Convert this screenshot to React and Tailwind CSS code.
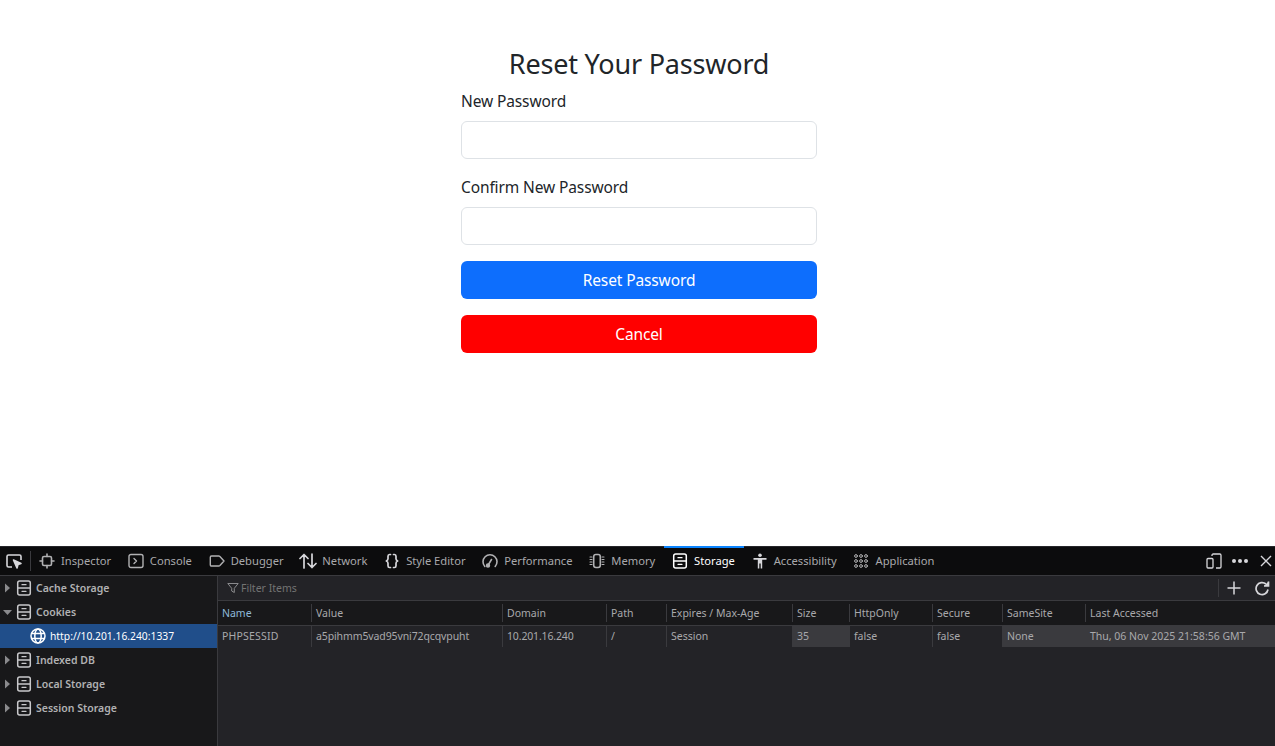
const I = ({ children, c = "#b1b1b3", w = 16 }) => (
  <svg width={w} height="16" viewBox="0 0 16 16" fill="none" stroke={c} strokeWidth="1.4" strokeLinecap="round" strokeLinejoin="round" className="shrink-0">{children}</svg>
);
const Cabinet = ({ c = "#d7d7db" }) => (
  <I c={c}><rect x="1.7" y="1" width="12.600" height="14" rx="2" strokeWidth="1.500" /><path d="M2 8h12M6 4.700h4M6 11.300h4" strokeWidth="1.300" /></I>
);
const tabs = [
  ["Inspector", <I><rect x="3.500" y="3.500" width="9" height="9" rx="1.500" strokeWidth="1.600" /><path d="M8 1v2.500M8 12.500V15M1 8h2.500M12.500 8H15" strokeWidth="1.600" /></I>],
  ["Console", <I><rect x="1" y="1.500" width="14" height="13" rx="2" /><path d="M6 5.500 8.500 8 6 10.500" /></I>],
  ["Debugger", <I><path d="M2.500 3h7.200c.5 0 .9.200 1.200.5L15 8l-4.100 4.500c-.3.3-.7.500-1.200.500H2.500c-.7 0-1.200-.5-1.200-1.200V4.200C1.300 3.500 1.800 3 2.500 3Z" /></I>],
  ["Network", <svg width="18" height="16" viewBox="0 0 18 16" fill="none" stroke="#d7d7db" strokeWidth="1.700" strokeLinecap="round" strokeLinejoin="round" className="shrink-0 -ml-[1px] -mr-[1px]"><path d="M5 15V1.500M1 5.500l4-4 4 4M13 1v13.500M9 10.500l4 4 4-4" /></svg>],
  ["Style Editor", <I c="#d7d7db"><path d="M6.500 1.500H5.500C4.300 1.500 4 2.200 4 3.200v2.600c0 1-.4 1.700-1.700 2.200C3.600 8.500 4 9.200 4 10.200v2.600c0 1 .3 1.700 1.500 1.700h1M9.500 1.500h1c1.200 0 1.500.7 1.500 1.700v2.600c0 1 .4 1.700 1.700 2.200-1.300.5-1.700 1.200-1.700 2.200v2.600c0 1-.3 1.700-1.500 1.700h-1" strokeWidth="1.700" /></I>],
  ["Performance", <I><path d="M2.800 13.500A7 7 0 1 1 13.200 13.500" strokeWidth="1.600" /><path d="M6.500 11.500 9.500 6.500" strokeWidth="1.600" /><circle cx="6" cy="12.500" r="1.500" fill="#b1b1b3" /></I>],
  ["Memory", <I><rect x="4.700" y="1.500" width="6.600" height="13" rx="2.200" strokeWidth="1.600" /><path d="M1 4h2M1 6.500h2M1 9h2M1 11.500h2M13 4h2M13 6.500h2M13 9h2M13 11.500h2" strokeWidth="1.100" /></I>],
  ["Storage", <Cabinet c="#ffffff" />, true],
  ["Accessibility", <svg width="16" height="16" viewBox="0 0 16 16" fill="#d7d7db" className="shrink-0"><circle cx="8" cy="2.200" r="1.800" /><path d="M1.500 5h13v1.700H10.200V15.500H8.700v-5H7.300v5H5.800V6.700H1.500Z" /></svg>],
  ["Application", <I><g strokeWidth="1"><circle cx="3" cy="3" r="1.400" /><circle cx="8" cy="3" r="1.400" /><circle cx="13" cy="3" r="1.400" /><circle cx="3" cy="8" r="1.400" /><circle cx="8" cy="8" r="1.400" /><circle cx="13" cy="8" r="1.400" /><circle cx="3" cy="13" r="1.400" /><circle cx="8" cy="13" r="1.400" /><circle cx="13" cy="13" r="1.400" /></g></I>],
];
const tree = [
  ["Cache Storage", "closed"],
  ["Cookies", "open"],
  ["http://10.201.16.240:1337", "child"],
  ["Indexed DB", "closed"],
  ["Local Storage", "closed"],
  ["Session Storage", "closed"],
];
const cols = [
  ["Name", "PHPSESSID", "w-[93px]", false, "tracking-[0.2px]"],
  ["Value", "a5pihmm5vad95vni72qcqvpuht", "w-[191px]", false, "tracking-[-0.11px]"],
  ["Domain", "10.201.16.240", "w-[104px]", false, "tracking-[-0.15px]"],
  ["Path", "/", "w-[60px]"],
  ["Expires / Max-Age", "Session", "w-[126px]"],
  ["Size", "35", "w-[57px]", true],
  ["HttpOnly", "false", "w-[83px]"],
  ["Secure", "false", "w-[70px]"],
  ["SameSite", "None", "w-[83px]", true],
  ["Last Accessed", "Thu, 06 Nov 2025 21:58:56 GMT", "flex-1", true],
];
const Field = ({ label }) => (
  <div className="mb-[16px]">
    <label className="block h-[32px] text-[15.500px] leading-[24px] tracking-[-0.12px] text-[#212529]">{label}</label>
    <input type="password" className="block w-full h-[38px] bg-white border border-[#dee2e6] rounded-[6px]" />
  </div>
);
export default function App() {
  return (
    <div className="w-[1275px] h-[746px] flex flex-col overflow-hidden bg-white font-['Noto_Sans',sans-serif]">
      <main className="h-[546px] shrink-0 pt-[44px] pl-[3px] flex justify-center">
        <div className="w-[356px]">
          <h1 className="h-[45px] text-[27px] leading-[40px] tracking-[-0.2px] text-center text-[#212529]">Reset Your Password</h1>
          <Field label="New Password" />
          <Field label="Confirm New Password" />
          <button className="block w-full h-[38px] pt-[2px] mb-[16px] rounded-[6px] bg-[#0d6efd] text-white text-[15.500px] tracking-[-0.12px]">Reset Password</button>
          <button className="block w-full h-[38px] pt-[2px] rounded-[6px] bg-[#ff0000] text-white text-[15.500px] tracking-[-0.12px]">Cancel</button>
        </div>
      </main>
      <section className="flex-1 flex flex-col bg-[#232327] text-[10.500px] text-[#a9a9ac]">
        <div className="h-[30px] shrink-0 flex items-stretch bg-[#0c0c0d] border-b border-[#3a3a3e] border-t border-t-[#26262a] text-[11.200px]">
          <div className="w-[30px] flex items-center justify-center pr-[2px]">
            <svg width="18" height="18" viewBox="0 0 18 18" fill="none" stroke="#d7d7db" strokeWidth="1.600" strokeLinejoin="round"><path d="M7 15H3.500C2.500 15 2 14.500 2 13.500v-9C2 3.500 2.500 3 3.500 3h11c1 0 1.500.5 1.500 1.500V8" /><path d="M8.500 8 16 11.500l-3 1-1 3.500Z" fill="#d7d7db" /></svg>
          </div>
          <div className="w-px my-[4px] bg-[#3a3a3e]" />
          {tabs.map(([name, icon, active]) => (
            <div key={name} className={`relative flex items-center gap-[6px] pl-[8px] pr-[8.750px] ${active ? "text-white" : ""}`}>
              {active && <span className="absolute left-0 right-0 -top-px h-[2px] bg-[#0a84ff]" />}
              {icon}
              <span>{name}</span>
            </div>
          ))}
          <div className="ml-auto flex items-center gap-[8px]">
            <div className="w-[18px] flex justify-center">
              <svg width="16" height="16" viewBox="0 0 16 16" fill="none" stroke="#d7d7db" strokeWidth="1.300"><path d="M6 3V2.200C6 1.500 6.500 1 7.200 1h6.600c.7 0 1.200.5 1.200 1.200v11.600c0 .7-.5 1.200-1.200 1.200H10" /><rect x="1" y="5.500" width="6" height="9.500" rx="1" /></svg>
            </div>
            <div className="w-[18px] flex justify-center gap-[2px]">
              <span className="w-[4px] h-[4px] rounded-full bg-[#d7d7db]" /><span className="w-[4px] h-[4px] rounded-full bg-[#d7d7db]" /><span className="w-[4px] h-[4px] rounded-full bg-[#d7d7db]" />
            </div>
            <div className="w-[18px] flex justify-center">
              <svg width="12" height="12" viewBox="0 0 12 12" fill="none" stroke="#d7d7db" strokeWidth="1.400"><path d="M1 1l10 10M11 1 1 11" /></svg>
            </div>
          </div>
        </div>
        <div className="flex-1 flex min-h-0">
          <aside className="w-[218px] shrink-0 bg-[#18181a] border-r border-[#3a3a3e]">
            {tree.map(([label, kind]) => (
              kind === "child" ? (
                <div key={label} className="h-[24px] flex items-center bg-[#204e8a] text-white text-[10.300px] pl-[30px] gap-[4px]">
                  <svg width="16" height="16" viewBox="0 0 16 16" fill="none" stroke="#ffffff" strokeWidth="1.500"><circle cx="8" cy="8" r="7" /><ellipse cx="8" cy="8" rx="3.200" ry="7" /><path d="M1.500 5.500h13M1.500 10.500h13" /></svg>
                  <span className="pt-[1px]">{label}</span>
                </div>
              ) : (
                <div key={label} className="h-[24px] flex items-center pl-[3px] font-semibold text-[#b1b1b3]">
                  {kind === "open" ? (
                    <svg width="10" height="10" viewBox="0 0 10 10" fill="#8a8a8d" className="shrink-0"><path d="M0 3h9L4.500 8Z" /></svg>
                  ) : (
                    <svg width="10" height="10" viewBox="0 0 10 10" fill="#8a8a8d" className="shrink-0"><path d="M2 .5 7 5 2 9.500Z" /></svg>
                  )}
                  <span className="ml-[3px] mr-[4px]"><Cabinet c="#c8c8cb" /></span>
                  <span className="pt-[1px]">{label}</span>
                </div>
              )
            ))}
          </aside>
          <div className="flex-1 min-w-0 flex flex-col">
            <div className="h-[25px] shrink-0 flex items-center border-b border-[#3a3a3e] pl-[9px]">
              <svg width="12" height="12" viewBox="0 0 12 12" fill="none" stroke="#8a8a8d" strokeWidth="1"><path d="M.8 1.500h10.400L7.300 6.300v4.200L4.700 9V6.300Z" strokeLinejoin="round" /></svg>
              <span className="ml-[2px] pt-[1px] text-[#737373]">Filter Items</span>
              <div className="ml-auto flex items-center">
                <div className="w-px h-[18px] bg-[#3a3a3e]" />
                <svg className="ml-[8px]" width="14" height="14" viewBox="0 0 14 14" stroke="#d7d7db" strokeWidth="1.500"><path d="M7 .5v13M.5 7h13" /></svg>
                <svg className="ml-[13px] mr-[5px]" width="16" height="16" viewBox="0 0 16 16" fill="none" stroke="#d7d7db" strokeWidth="1.700"><path d="M14 9.500A6 6 0 1 1 12 4" /><path d="M14.500 1.500V6H10" fill="#d7d7db" /></svg>
              </div>
            </div>
            <div className="flex-1 flex">
              {cols.map(([head, val, w, hi, track], i) => (
                <div key={head} className={`${w} shrink-0 flex flex-col`}>
                  <div className="h-[25px] flex items-center bg-[#18181a] border-b border-[#3a3a3e]">
                    <span className={`h-[18px] flex items-center pl-[4px] pt-[1px] ${i ? "border-l border-[#3a3a3e]" : ""} ${i === 0 ? "text-[#8fb8d8]" : ""}`}>{head}</span>
                  </div>
                  <div className={`h-[21px] flex items-center ${hi ? "bg-[#3a3a3e]" : ""}`}>
                    <span className={`h-full flex items-center pl-[4px] whitespace-nowrap ${track || ""} ${i ? "border-l border-[#3a3a3e]" : ""}`}>{val}</span>
                  </div>
                </div>
              ))}
            </div>
          </div>
        </div>
      </section>
    </div>
  );
}
